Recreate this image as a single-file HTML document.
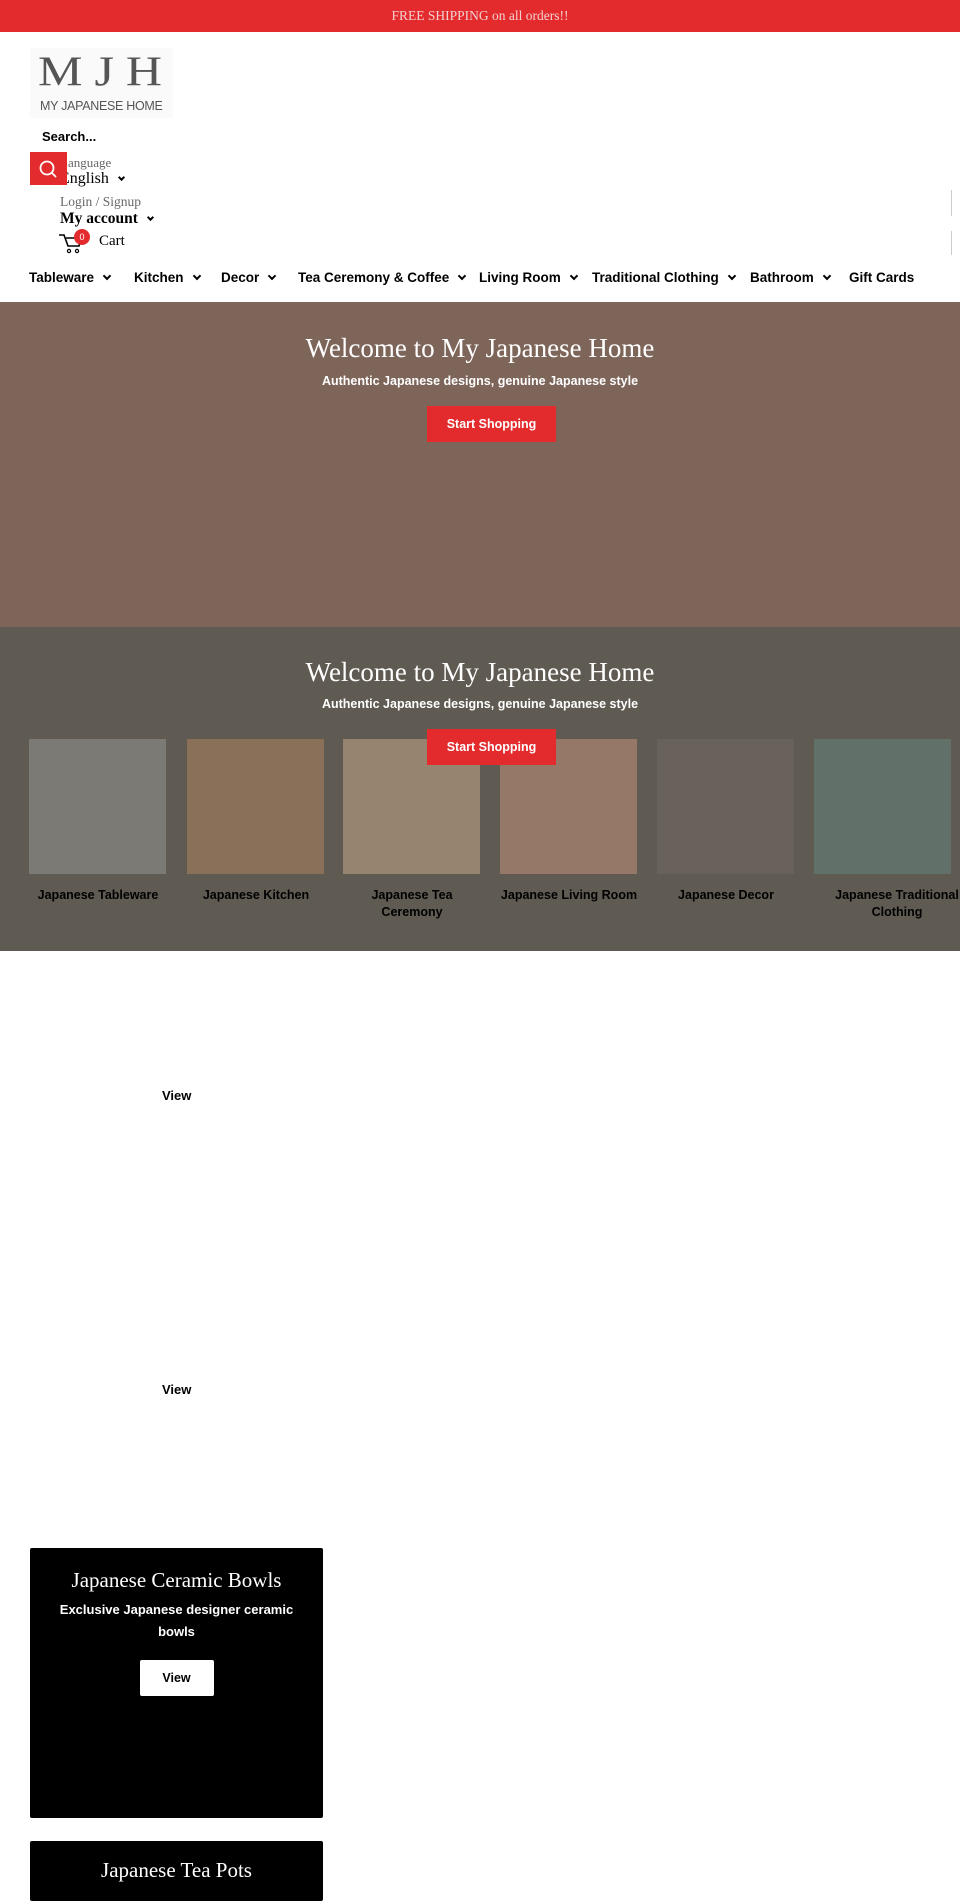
<!DOCTYPE html>
<html><head><meta charset="utf-8"><style>
*{margin:0;padding:0;box-sizing:border-box}
body{width:960px;height:1875px;background:#fff;position:relative;overflow:hidden;font-family:"Liberation Sans",sans-serif;color:#000}
.a{position:absolute}
.serif{font-family:"Liberation Serif","DejaVu Serif",serif}
.nav{font-size:13.5px;font-weight:bold;top:270px;line-height:16px}
.chev{display:inline-block;width:6px;height:6px;border-right:2px solid #000;border-bottom:2px solid #000;transform:rotate(45deg);margin-left:10px;position:relative;top:-3px}
.hero{left:0;width:960px;text-align:center;color:#fff}
.hero h1{font-family:"Liberation Serif",serif;font-weight:normal;font-size:27px;position:absolute;left:0;width:960px;line-height:32px}
.hero p{font-size:12.5px;font-weight:bold;position:absolute;left:0;width:960px;line-height:16px}
.btn{position:absolute;left:427px;width:129px;height:36px;background:#e32b2e;color:#fff;font-size:12.5px;font-weight:bold;line-height:36px;text-align:center}
.tile{position:absolute;top:739px;width:137px;height:135px}
.lbl{position:absolute;top:887px;width:160px;text-align:center;font-size:12.5px;font-weight:bold;line-height:17px;color:#000}
.card{position:absolute;left:30px;width:293px;background:#000;border-radius:2px;color:#fff;text-align:center}
</style></head><body>
<div class="a serif" style="left:0;top:0;width:960px;height:32px;background:#e32b2e;color:#f3d0d0;font-size:13.5px;text-align:center;line-height:31px">FREE SHIPPING on all orders!!</div>

<div class="a" style="left:30px;top:48px;width:143px;height:70px;background:#fafafa"></div>
<div class="a serif" style="left:38px;top:44px;font-size:50px;line-height:54px;color:#555;letter-spacing:12px;transform:scaleY(0.85)">MJH</div>
<div class="a" style="left:40px;top:99px;font-size:12.5px;color:#555;letter-spacing:-0.3px">MY JAPANESE HOME</div>

<div class="a" style="left:42px;top:129px;font-size:13px;font-weight:bold">Search...</div>
<div class="a serif" style="left:60px;top:155px;font-size:13px;color:#666">Language</div>
<div class="a serif" style="left:60px;top:170px;font-size:16px">English<span class="chev" style="width:5px;height:5px"></span></div>
<div class="a" style="left:30px;top:152px;width:37px;height:33px;background:#e32b2e">
<svg width="37" height="33"><circle cx="17" cy="16" r="6.5" fill="none" stroke="#fff" stroke-width="1.8"/><line x1="22" y1="21" x2="26" y2="25" stroke="#fff" stroke-width="1.8"/></svg></div>
<div class="a serif" style="left:60px;top:194px;font-size:13.5px;color:#666">Login / Signup</div>
<div class="a serif" style="left:60px;top:210px;font-size:15.5px;font-weight:bold">My account<span class="chev" style="width:5px;height:5px"></span></div>
<svg class="a" style="left:58px;top:232px" width="26" height="22"><path d="M1 3h5l4 11h11l2-8H8" fill="none" stroke="#000" stroke-width="1.6"/><circle cx="11" cy="19" r="1.6" fill="none" stroke="#000" stroke-width="1.2"/><circle cx="19" cy="19" r="1.6" fill="none" stroke="#000" stroke-width="1.2"/></svg>
<div class="a" style="left:74px;top:229px;width:16px;height:16px;border-radius:50%;background:#e32b2e;color:#fff;font-size:9px;text-align:center;line-height:16px">0</div>
<div class="a serif" style="left:99px;top:233px;font-size:15px">Cart</div>
<div class="a" style="left:951px;top:190px;width:1px;height:26px;background:#ccc"></div>
<div class="a" style="left:951px;top:231px;width:1px;height:24px;background:#ccc"></div>

<div class="a nav" style="left:29px">Tableware<span class="chev"></span></div>
<div class="a nav" style="left:134px">Kitchen<span class="chev"></span></div>
<div class="a nav" style="left:221px">Decor<span class="chev"></span></div>
<div class="a nav" style="left:298px">Tea Ceremony &amp; Coffee<span class="chev"></span></div>
<div class="a nav" style="left:479px">Living Room<span class="chev"></span></div>
<div class="a nav" style="left:592px">Traditional Clothing<span class="chev"></span></div>
<div class="a nav" style="left:750px">Bathroom<span class="chev"></span></div>
<div class="a nav" style="left:849px">Gift Cards</div>

<div class="a hero" style="top:302px;height:325px;background:#7e655a">
<h1 style="top:30px">Welcome to My Japanese Home</h1>
<p style="top:71px">Authentic Japanese designs, genuine Japanese style</p>
<div class="btn" style="top:104px">Start Shopping</div>
</div>
<div class="a hero" style="top:627px;height:324px;background:#5f5a52">
<h1 style="top:29px">Welcome to My Japanese Home</h1>
<p style="top:69px">Authentic Japanese designs, genuine Japanese style</p>
</div>
<div class="tile" style="left:29px;background:#7b7a74"></div>
<div class="tile" style="left:187px;background:#8b7059"></div>
<div class="tile" style="left:343px;background:#96846f"></div>
<div class="tile" style="left:500px;background:#967868"></div>
<div class="tile" style="left:657px;background:#69625a"></div>
<div class="tile" style="left:814px;background:#617069"></div>
<div class="btn" style="top:729px">Start Shopping</div>
<div class="lbl" style="left:18px">Japanese Tableware</div>
<div class="lbl" style="left:176px">Japanese Kitchen</div>
<div class="lbl" style="left:332px">Japanese Tea<br>Ceremony</div>
<div class="lbl" style="left:489px">Japanese Living Room</div>
<div class="lbl" style="left:646px">Japanese Decor</div>
<div class="lbl" style="left:812px;width:170px">Japanese Traditional<br>Clothing</div>

<div class="a" style="left:162px;top:1088px;font-size:13px;font-weight:bold">View</div>
<div class="a" style="left:162px;top:1382px;font-size:13px;font-weight:bold">View</div>

<div class="card" style="top:1548px;height:270px">
<div class="serif" style="margin-top:19px;font-size:21px;line-height:26px">Japanese Ceramic Bowls</div>
<div style="margin:6px auto 0;width:240px;font-size:13px;font-weight:bold;line-height:22px">Exclusive Japanese designer ceramic bowls</div>
<div style="margin:17px auto 0;width:74px;height:36px;background:#fff;color:#000;font-size:12.5px;font-weight:bold;line-height:36px;border-radius:2px">View</div>
</div>
<div class="card" style="top:1841px;height:60px">
<div class="serif" style="margin-top:17px;font-size:21px">Japanese Tea Pots</div>
</div>
</body></html>
